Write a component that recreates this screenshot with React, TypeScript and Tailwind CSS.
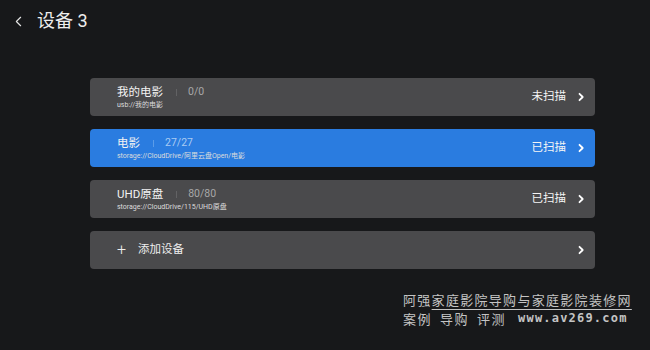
import { ChevronLeft } from "lucide-react";

interface Device {
  name: string;
  count: string;
  path: string;
  status: string;
  active?: boolean;
}

const devices: Device[] = [
  { name: "我的电影", count: "0/0", path: "usb://我的电影", status: "未扫描" },
  { name: "电影", count: "27/27", path: "storage://CloudDrive/阿里云盘Open/电影", status: "已扫描", active: true },
  { name: "UHD原盘", count: "80/80", path: "storage://CloudDrive/115/UHD原盘", status: "已扫描" },
];

const font = "font-['Roboto','Noto_Sans_CJK_SC',sans-serif]";

function Chevron() {
  return (
    <svg width="8" height="10" viewBox="0 0 8 10" className="ml-[11px]">
      <path d="M2.5 1.8 L5.7 5 L2.5 8.2" fill="none" stroke="white" strokeWidth="1.8" strokeLinecap="round" strokeLinejoin="round" />
    </svg>
  );
}

export default function App() {
  return (
    <div className={`relative h-[350px] w-[650px] overflow-hidden bg-[#17181a] text-white ${font}`}>
      <header className="flex h-[42px] items-center pl-[10px]">
        <ChevronLeft size={17} strokeWidth={1.6} className="text-[#e6e6e6]" />
        <h1 className="ml-[10px] text-[18px] leading-none text-[#eeeeee]">设备 3</h1>
      </header>

      <div className="mt-[36px] ml-[90px] flex w-[505px] flex-col gap-[13px]">
        {devices.map((d) => (
          <button
            key={d.name}
            className={`flex h-[38px] items-center rounded-[4px] pl-[27px] pr-[10px] text-left ${
              d.active ? "bg-[#2a7ce0]" : "bg-[#4a4a4c]"
            }`}
          >
            <div className="flex flex-1 flex-col">
              <div className="flex items-center">
                <span className="text-[11.5px] leading-[16px] text-[#f2f2f2]">{d.name}</span>
                <span className={`ml-[13px] h-[7px] w-px ${d.active ? "bg-[#5b9ce8]" : "bg-[#626264]"}`} />
                <span className={`ml-[11px] text-[10.5px] leading-[16px] ${d.active ? "text-[#a9cbf3]" : "text-[#a8a8a8]"}`}>
                  {d.count}
                </span>
              </div>
              <span className="mt-[1px] text-[7px] leading-[9px] text-[#dcdcdc]">{d.path}</span>
            </div>
            <span className="text-[11.5px] text-[#f5f5f5]">{d.status}</span>
            <Chevron />
          </button>
        ))}

        <button className="flex h-[38px] items-center rounded-[4px] bg-[#4a4a4c] pl-[27px] pr-[10px] text-left">
          <span className="text-[16px] font-light leading-none text-[#eeeeee]">+</span>
          <span className="ml-[12px] flex-1 text-[11.5px] text-[#eeeeee]">添加设备</span>
          <Chevron />
        </button>
      </div>

      <div className="absolute left-[403px] top-[290px] font-['Noto_Sans_CJK_SC',sans-serif] text-[13px] leading-[19px] text-[#c4c4c4]">
        <div className="tracking-[1.3px]">
          阿强<span className="underline decoration-[#c4c4c4] underline-offset-[4px]">家庭影院导购与家庭影院装修网</span>
        </div>
        <div className="flex items-center tracking-[1.5px]">
          <span>案例</span>
          <span className="ml-[8px]">导购</span>
          <span className="ml-[8px]">评测</span>
          <span className="ml-[12px] font-['DejaVu_Sans_Mono',monospace] text-[12px] font-bold tracking-[1.2px]">www.av269.com</span>
        </div>
      </div>
    </div>
  );
}
